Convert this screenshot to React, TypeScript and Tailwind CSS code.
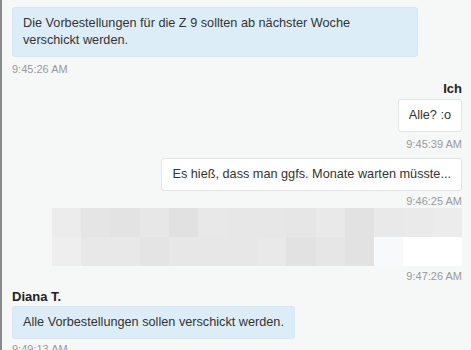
import React from "react";

const row1 = ["#ececec","#e5e5e5","#e3e3e3","#e7e7e7","#e1e1e2","#e8e8e8","#e7e7e7","#e7e7e7","#e6e6e6","#e9e9e9","#e2e2e2","#e9e9e9","#eaeaea","#ececec"];
const row2 = ["#eeeeee","#e8e8e9","#e8e8e9","#e4e4e4","#e7e7e7","#e7e7e7","#e7e7e7","#e9e9e9","#e2e2e2","#e6e6e6","#e2e2e2","#f8f9fb","#ffffff","#ffffff"];

export default function App() {
  return (
    <div className="w-[471px] h-[350px] overflow-hidden bg-[#f6f7f7] border-l-2 border-[#8a8a8a] text-[#333] font-['Liberation_Sans',Arial,sans-serif] relative">
      <div className="pl-[10px] pr-[9px] pt-[7px] flex flex-col">
        <div className="self-start w-[406px] bg-[#ddedf8] border border-[#d6e6f2] rounded-[3px] px-[10px] py-[7px] text-[12.7px] leading-[17px]">
          Die Vorbestellungen für die Z 9 sollten ab nächster Woche verschickt werden.
        </div>
        <div className="mt-[6px] text-[11px] leading-[13px] text-[#9a9a9a]">9:45:26 AM</div>
        <div className="mt-[5px] self-end text-[13px] leading-[15px] font-bold text-[#222]">Ich</div>
        <div className="mt-[3px] self-end bg-white border border-[#e2e4e6] rounded-[3px] px-[10px] py-[7px] text-[12.7px] leading-[17px]">
          Alle? :o
        </div>
        <div className="mt-[6px] self-end text-[11px] leading-[13px] text-[#9a9a9a]">9:45:39 AM</div>
        <div className="mt-[7px] self-end bg-white border border-[#e2e4e6] rounded-[3px] px-[10px] py-[7px] text-[12.7px] leading-[17px]">
          Es hieß, dass man ggfs. Monate warten müsste...
        </div>
        <div className="mt-[4px] self-end text-[11px] leading-[13px] text-[#9a9a9a]">9:46:25 AM</div>
        <div className="mt-0 self-end flex flex-col">
          <div className="flex">
            {row1.map((c, i) => (
              <div key={i} className="w-[29.3px] h-[29px]" style={{ backgroundColor: c }} />
            ))}
          </div>
          <div className="flex">
            {row2.map((c, i) => (
              <div key={i} className="w-[29.3px] h-[29px]" style={{ backgroundColor: c }} />
            ))}
          </div>
        </div>
        <div className="mt-[4px] self-end text-[11px] leading-[13px] text-[#9a9a9a]">9:47:26 AM</div>
        <div className="mt-[6px] self-start text-[13px] leading-[15px] font-bold text-[#222]">Diana T.</div>
        <div className="mt-[2px] self-start bg-[#ddedf8] border border-[#d6e6f2] rounded-[3px] px-[10px] py-[7px] text-[12.7px] leading-[17px]">
          Alle Vorbestellungen sollen verschickt werden.
        </div>
        <div className="mt-[4px] text-[11px] leading-[13px] text-[#9a9a9a]">9:49:13 AM</div>
      </div>
    </div>
  );
}
